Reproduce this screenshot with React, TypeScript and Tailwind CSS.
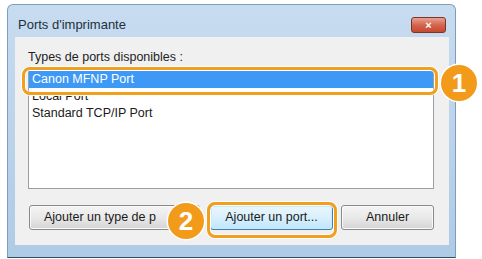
const font = "font-['Liberation_Sans',Arial,sans-serif]";

const Badge = ({ n, className }: { n: string; className: string }) => (
  <div
    className={`absolute flex h-[36px] w-[36px] items-center justify-center rounded-full bg-[#f29a1a] text-[26px] font-bold leading-none text-white shadow-[0_0_0_1.5px_#fff] ${className}`}
  >
    {n}
  </div>
);

const WinButton = ({
  children,
  className,
  focused,
}: {
  children: React.ReactNode;
  className: string;
  focused?: boolean;
}) => (
  <div
    className={`flex h-[25px] items-center justify-center overflow-hidden whitespace-nowrap rounded-[3px] border text-[12.5px] text-[#1a1a1a] ${
      focused
        ? "border-[#3c7fb1] bg-gradient-to-b from-[#eaf6fd] via-[#d9f0fc] to-[#bee6fd] shadow-[inset_0_0_0_1px_#c8ecfb]"
        : "border-[#8a8a8a] bg-gradient-to-b from-[#f4f4f4] via-[#e9e9e9] to-[#d4d4d4] shadow-[inset_0_0_0_1px_#fafafa]"
    } ${className}`}
  >
    {children}
  </div>
);

export default function App() {
  return (
    <div className={`h-[259px] w-[482px] bg-white pl-[7px] pt-[4px] ${font}`}>
      {/* window */}
      <div className="flex h-[254px] w-[449px] flex-col rounded-t-[6px] border border-[#7d9dbd] border-b-[#2f4f63] bg-gradient-to-b from-[#c8dcf0] via-[#bcd3eb] to-[#aecbe6]">
        {/* title bar */}
        <div className="flex h-[32px] shrink-0 items-center justify-between pl-[10px] pr-[9px] pt-[8px]">
          <span className="text-[13px] text-[#22303c]">Ports d'imprimante</span>
          <div className="flex h-[16px] w-[35px] items-center justify-center rounded-[3px] border border-[#7a3528] bg-gradient-to-b from-[#e8a293] via-[#d5634d] to-[#c44a2f] text-[11px] font-bold leading-none text-white">
            ×
          </div>
        </div>
        {/* client area */}
        <div className="relative ml-[7px] mr-[6px] h-[208px] bg-[#f0f0f0] pl-[13px] pr-[15px] pt-[13px]">
          <div className="text-[12.5px] leading-[15px] text-[#1e1e1e]">Types de ports disponibles :</div>
          {/* list */}
          <div className="relative mt-[5px] h-[119px] w-[406px] border border-[#9a9ea6] bg-white text-[12.5px] leading-[17px] text-[#1a1a1a]">
            <div className="bg-[#3d99f5] pl-[3px] text-white">Canon MFNP Port</div>
            <div className="pl-[3px]">Local Port</div>
            <div className="pl-[3px]">Standard TCP/IP Port</div>
            <div className="absolute left-[-7px] top-[-4px] h-[28px] w-[416px] rounded-[8px] border-[3px] border-[#f0a01c] shadow-[0_0_0_1px_#fff,inset_0_0_0_1px_#fff]" />
          </div>
          {/* buttons */}
          <div className="mt-[16px] flex">
            <WinButton className="ml-[1px] w-[171px] justify-start pl-[14px]">Ajouter un type de p</WinButton>
            <WinButton focused className="ml-[10px] w-[123px]">
              Ajouter un port...
            </WinButton>
            <WinButton className="ml-[8px] w-[93px]">Annuler</WinButton>
          </div>
          <div className="absolute left-[192px] top-[165px] h-[36px] w-[130px] rounded-[8px] border-[3px] border-[#f0a01c] shadow-[0_0_0_1px_#fff,inset_0_0_0_1px_#fff]" />
          <Badge n="2" className="left-[153px] top-[166px]" />
        </div>
      </div>
      <Badge n="1" className="left-[441px] top-[65px]" />
    </div>
  );
}
